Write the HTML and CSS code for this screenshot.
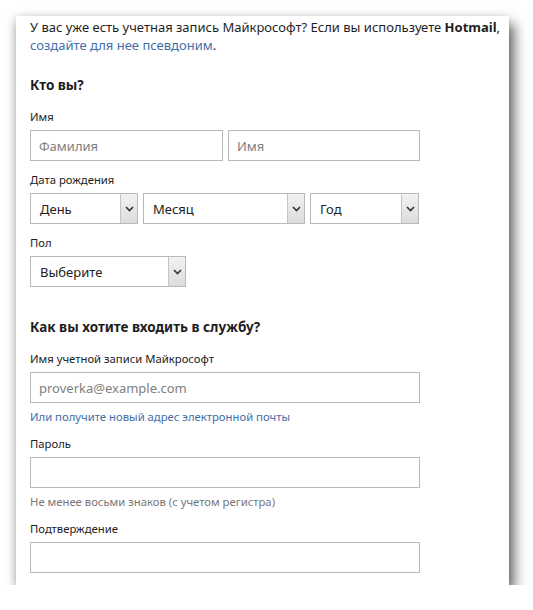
FILE: index.html
```html
<!DOCTYPE html>
<html lang="ru">
<head>
<meta charset="utf-8">
<title>Регистрация</title>
<link rel="stylesheet" href="styles.css">
</head>
<body>
<div class="panel">
  <p class="intro">У вас уже есть учетная запись Майкрософт? Если вы используете <b>Hotmail</b>,<br><a href="#">создайте для нее псевдоним</a>.</p>

  <h2 class="section-title">Кто вы?</h2>

  <div class="field">
    <label class="label">Имя</label>
    <div class="row">
      <input class="input w193" type="text" placeholder="Фамилия">
      <input class="input w192" type="text" placeholder="Имя">
    </div>
  </div>

  <div class="field">
    <label class="label">Дата рождения</label>
    <div class="row">
      <div class="select day"><span class="select-text">День</span><span class="arrow"><svg width="9" height="6" viewBox="0 0 9 6"><path d="M1 1 L4.5 4.5 L8 1" fill="none" stroke="#333" stroke-width="1.6"/></svg></span></div>
      <div class="select month"><span class="select-text">Месяц</span><span class="arrow"><svg width="9" height="6" viewBox="0 0 9 6"><path d="M1 1 L4.5 4.5 L8 1" fill="none" stroke="#333" stroke-width="1.6"/></svg></span></div>
      <div class="select year"><span class="select-text">Год</span><span class="arrow"><svg width="9" height="6" viewBox="0 0 9 6"><path d="M1 1 L4.5 4.5 L8 1" fill="none" stroke="#333" stroke-width="1.6"/></svg></span></div>
    </div>
  </div>

  <div class="field">
    <label class="label">Пол</label>
    <div class="row">
      <div class="select gender"><span class="select-text">Выберите</span><span class="arrow"><svg width="9" height="6" viewBox="0 0 9 6"><path d="M1 1 L4.5 4.5 L8 1" fill="none" stroke="#333" stroke-width="1.6"/></svg></span></div>
    </div>
  </div>

  <h2 class="section-title second">Как вы хотите входить в службу?</h2>

  <div class="field">
    <label class="label">Имя учетной записи Майкрософт</label>
    <input class="input wide" type="text" placeholder="proverka@example.com">
    <a class="sublink" href="#">Или получите новый адрес электронной почты</a>
  </div>

  <div class="field">
    <label class="label">Пароль</label>
    <input class="input wide" type="password">
    <span class="hint">Не менее восьми знаков (с учетом регистра)</span>
  </div>

  <div class="field">
    <label class="label">Подтверждение</label>
    <input class="input wide" type="password">
  </div>
</div>
</body>
</html>
```

FILE: styles.css
```css
html, body {
  margin: 0;
  padding: 0;
  background: #ffffff;
}

body {
  padding: 16px 0 0 16px;
  font-family: "Noto Sans", "Open Sans", sans-serif;
  color: #1e1e1e;
}

.panel {
  width: 493px;
  height: 569px;
  box-sizing: border-box;
  background: #ffffff;
  padding: 2px 0 0 14px;
  box-shadow: 5px 8px 12px rgba(0, 0, 0, 0.62), -3px 0 8px rgba(0, 0, 0, 0.12);
  display: flex;
  flex-direction: column;
  overflow: hidden;
}

.intro {
  margin: 0;
  font-size: 13px;
  line-height: 18px;
  white-space: nowrap;
}

.intro b {
  font-weight: 700;
}

a {
  color: #3f6ea8;
  text-decoration: none;
}

.section-title {
  margin: 21px 0 0 0;
  font-size: 13.5px;
  line-height: 20px;
  font-weight: 700;
}

.section-title.second {
  margin-top: 30px;
}

.field {
  display: flex;
  flex-direction: column;
  margin-top: 11px;
}

.section-title + .field {
  margin-top: 14px;
}

.label {
  font-size: 11.3px;
  line-height: 16px;
  margin-bottom: 5px;
  color: #222;
}

.row {
  display: flex;
  gap: 5px;
}

.input {
  box-sizing: border-box;
  height: 31px;
  border: 1px solid #b9b9b9;
  padding: 0 8px;
  font-family: inherit;
  font-size: 13px;
  color: #222;
  outline: none;
  margin: 0;
}

.input::placeholder {
  color: #808080;
}

.w193 { width: 193px; }
.w192 { width: 192px; }
.wide { width: 390px; }

.select {
  box-sizing: border-box;
  height: 31px;
  border: 1px solid #b9b9b9;
  display: flex;
  align-items: stretch;
  background: #fff;
}

.select-text {
  flex: 1;
  display: flex;
  align-items: center;
  padding-left: 9px;
  font-size: 13px;
  color: #222;
}

.arrow {
  width: 16px;
  border-left: 1px solid #c4c4c4;
  background: linear-gradient(#f2f2f2, #dcdcdc);
  display: flex;
  align-items: center;
  justify-content: center;
}

.day { width: 108px; }
.month { width: 162px; }
.year { width: 109px; }
.gender { width: 156px; }

.sublink {
  font-size: 11.3px;
  line-height: 16px;
  margin-top: 6px;
}

.hint {
  font-size: 11.3px;
  line-height: 16px;
  margin-top: 6px;
  color: #777;
}
```
